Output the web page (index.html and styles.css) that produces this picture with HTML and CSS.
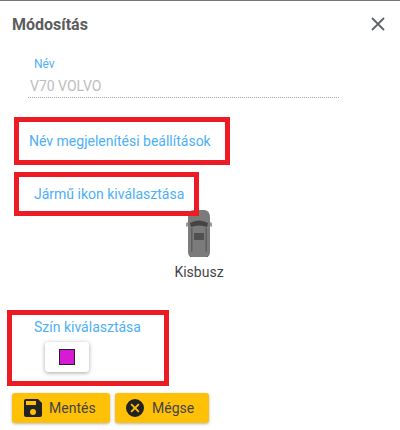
FILE: index.html
```html
<!DOCTYPE html>
<html lang="en">
<head>
    <meta charset="UTF-8">
    <meta name="viewport" content="width=device-width, initial-scale=1.0">
    <title>Módosítás</title>
    <link rel="stylesheet" href="styles.css">
</head>
<body>
    <div class="dialog">
        <div class="header">
            <h1>Módosítás</h1>
            <svg class="close-icon" width="14" height="14" viewBox="0 0 14 14">
                <path d="M1 1L13 13M13 1L1 13" stroke="#5f6368" stroke-width="1.8" fill="none"/>
            </svg>
        </div>

        <div class="name-field">
            <label>Név</label>
            <div class="name-value">V70 VOLVO</div>
        </div>

        <div class="section-link name-link">Név megjelenítési beállítások</div>
        <div class="section-link icon-link">Jármű ikon kiválasztása</div>

        <div class="vehicle">
            <svg class="van" width="30" height="48" viewBox="0 0 30 48">
                <path d="M2 13L6 11V15L2 17Z" fill="#9a9a9a"/>
                <path d="M28 13L24 11V15L28 17Z" fill="#9a9a9a"/>
                <rect x="6" y="39" width="3" height="8" fill="#222"/>
                <rect x="21" y="39" width="3" height="8" fill="#222"/>
                <rect x="5" y="13" width="2" height="8" fill="#222"/>
                <rect x="23" y="13" width="2" height="8" fill="#222"/>
                <path d="M10 0H20Q26 0 26 8V42Q26 47 22 47H8Q4 47 4 42V8Q4 0 10 0Z" fill="#7b7b7b"/>
                <path d="M6 13Q15 8 24 13L23 17Q15 14 7 17Z" fill="#444"/>
                <rect x="7" y="18" width="1.5" height="24" fill="#5f5f5f"/>
                <rect x="21.5" y="18" width="1.5" height="24" fill="#5f5f5f"/>
                <rect x="10" y="23" width="10" height="7" fill="#505050"/>
            </svg>
            <div class="vehicle-name">Kisbusz</div>
        </div>

        <div class="section-link color-link">Szín kiválasztása</div>
        <button class="color-button"><span class="color-swatch"></span></button>

        <div class="actions">
            <button class="action save">
                <svg width="18" height="18" viewBox="3 3 18 18">
                    <path d="M17 3H5a2 2 0 0 0-2 2v14a2 2 0 0 0 2 2h14a2 2 0 0 0 2-2V7l-4-4zm-5 16a3 3 0 1 1 0-6 3 3 0 0 1 0 6zm3-10H5V5h10v4z" fill="#222"/>
                </svg>
                Mentés
            </button>
            <button class="action cancel">
                <svg width="18" height="18" viewBox="2 2 20 20">
                    <path d="M12 2a10 10 0 1 0 0 20 10 10 0 0 0 0-20zm5 13.6L15.6 17 12 13.4 8.4 17 7 15.6 10.6 12 7 8.4 8.4 7 12 10.6 15.6 7 17 8.4 13.4 12 17 15.6z" fill="#222"/>
                </svg>
                Mégse
            </button>
        </div>

        <div class="marker marker-name"></div>
        <div class="marker marker-icon"></div>
        <div class="marker marker-color"></div>
    </div>
</body>
</html>
```

FILE: styles.css
```css
body {
    margin: 0;
    font-family: Roboto, Arial, sans-serif;
    background-color: white;
}
.dialog {
    position: relative;
    width: 400px;
    height: 430px;
    overflow: hidden;
    border-top: 1px solid #777;
    box-sizing: border-box;
}
.header {
    display: flex;
    justify-content: space-between;
    align-items: center;
    padding: 13px 15px 0 12px;
    height: 20px;
}
h1 {
    margin: 0;
    font-size: 16px;
    font-weight: 700;
    color: #5c5c5c;
}
.name-field {
    margin: 24px 61px 0 28px;
    height: 39px;
    border-bottom: 1px dotted #aaa;
}
.name-field label {
    display: block;
    padding-left: 6px;
    font-size: 12px;
    line-height: 13px;
    color: #4db0f7;
}
.name-value {
    padding: 7px 0 0 2px;
    font-size: 14px;
    line-height: 16px;
    color: #bdbdbd;
}
.section-link {
    font-size: 14px;
    line-height: 16px;
    color: #4db0f7;
}
.name-link {
    margin: 35px 0 0 29px;
}
.icon-link {
    margin: 37px 0 0 34px;
}
.vehicle {
    width: 60px;
    margin: 8px 0 0 169px;
    text-align: center;
}
.van {
    display: block;
    margin: 0 auto;
}
.vehicle-name {
    margin-top: 6px;
    font-size: 14px;
    line-height: 16px;
    color: #444;
}
.color-link {
    margin: 39px 0 0 34px;
}
.color-button {
    display: flex;
    align-items: center;
    justify-content: center;
    width: 44px;
    height: 30px;
    margin: 7px 0 0 45px;
    padding: 0;
    border: none;
    border-radius: 3px;
    background-color: white;
    box-shadow: 0 1px 4px rgba(0,0,0,0.35);
}
.color-swatch {
    width: 14px;
    height: 14px;
    border: 1px solid #222;
    background-color: #d61ad6;
}
.actions {
    display: flex;
    gap: 5px;
    margin: 21px 0 0 12px;
}
.action {
    display: flex;
    align-items: center;
    height: 30px;
    padding: 0;
    border: none;
    border-radius: 3px;
    background-color: #ffc107;
    color: #444;
    font-family: inherit;
    font-size: 14px;
    box-shadow: 0 1px 3px rgba(0,0,0,0.3);
}
.save svg {
    margin-right: 7px;
}
.cancel svg {
    margin-right: 8px;
}
.save {
    width: 98px;
    padding-left: 12px;
}
.cancel {
    width: 94px;
    padding-left: 11px;
}
.marker {
    position: absolute;
    box-sizing: border-box;
    border: 5px solid #ed1c24;
}
.marker-name {
    left: 14px;
    top: 116px;
    width: 216px;
    height: 48px;
}
.marker-icon {
    left: 14px;
    top: 171px;
    width: 185px;
    height: 44px;
}
.marker-color {
    left: 7px;
    top: 309px;
    width: 162px;
    height: 76px;
}
```
